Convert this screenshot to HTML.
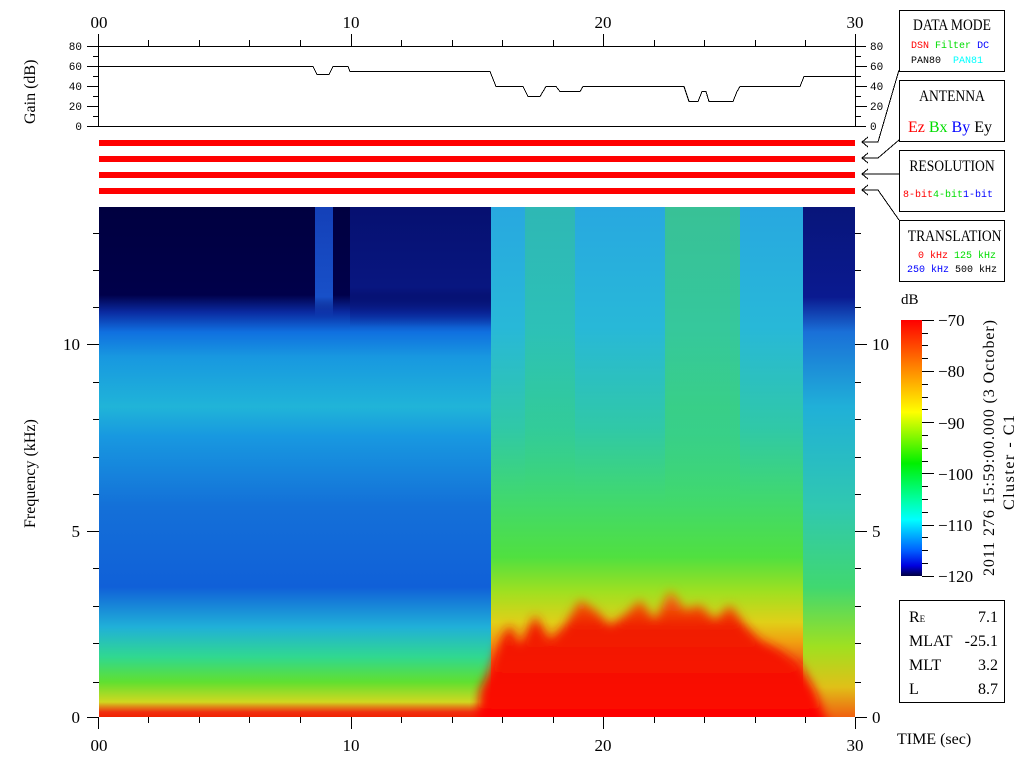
<!DOCTYPE html>
<html><head><meta charset="utf-8"><style>
body{margin:0;background:#fff;width:1024px;height:768px;overflow:hidden;position:relative;font-family:"Liberation Sans",sans-serif}
.a{position:absolute}
.serif{font-family:"Liberation Serif",serif}
.mono{font-family:"Liberation Mono",monospace}
.box{position:absolute;border:1px solid #000;background:#fff}
.bar{position:absolute;left:99px;width:756px;height:6px;background:#f00}
.t{position:absolute;left:0;width:104px;text-align:center;font-size:16px;transform:scaleX(.85);transform-origin:center}
</style></head><body>

<div class="a" style="left:99px;top:207px;width:392px;height:510px;background:linear-gradient(to bottom,#000040 0px,#00004a 88px,#0a2aa0 105px,#1070e0 125px,#1898e0 150px,#20b4d8 200px,#1898e0 230px,#1470d8 300px,#1060d8 380px,#20b0d8 420px,#30d890 450px,#60e030 475px,#d0d820 495px,#f03010 505px,#f02000 510px)"></div>
<div class="a" style="left:350px;top:207px;width:141px;height:120px;background:linear-gradient(to bottom,#061070 0,#081680 80px,rgba(16,80,220,0) 120px)"></div>
<div class="a" style="left:315px;top:207px;width:18px;height:110px;background:linear-gradient(to bottom,#1440b8 0,#1850c8 90px,rgba(24,100,220,0))"></div>
<div class="a" style="left:491px;top:207px;width:364px;height:510px;background:linear-gradient(to bottom,#28a8e0 0px,#28b8d8 120px,#30c8a8 220px,#40d870 290px,#50e040 350px,#a0e020 385px,#e0d018 415px,#f0a010 435px,#f06010 455px,#f03000 510px)"></div>
<div class="a" style="left:525px;top:207px;width:50px;height:300px;background:linear-gradient(to bottom,rgba(60,220,80,.3),rgba(60,220,80,.2) 200px,rgba(60,220,80,0))"></div>
<div class="a" style="left:665px;top:207px;width:75px;height:300px;background:linear-gradient(to bottom,rgba(80,230,40,.4),rgba(80,230,40,.3) 200px,rgba(80,230,40,0))"></div>
<div class="a" style="left:803px;top:207px;width:52px;height:510px;background:linear-gradient(to bottom,#08157a 0,#0a1a90 90px,#1a70d8 125px,#20b0d8 200px,#30c8b0 300px,#40d870 380px,#a0e020 440px,#e0c018 480px,#f06010 510px)"></div>
<svg class="a" style="left:0;top:0" width="1024" height="768">
<defs><linearGradient id="rg" x1="0" y1="0" x2="0" y2="1"><stop offset="0" stop-color="#f08010"/><stop offset=".25" stop-color="#f02000"/><stop offset="1" stop-color="#f00"/></linearGradient>
<filter id="bl" x="-5%" y="-10%" width="110%" height="120%"><feGaussianBlur stdDeviation="5"/></filter>
<clipPath id="cp"><rect x="470" y="500" width="385" height="217"/></clipPath></defs>
<g clip-path="url(#cp)"><polygon filter="url(#bl)" fill="url(#rg)" points="476,730 480,690 490,670 500,640 510,625 520,645 535,615 550,640 565,625 580,600 595,610 610,625 625,615 640,600 655,620 670,590 685,610 700,605 715,620 730,605 745,625 760,640 780,650 800,665 815,690 830,730"/></g>
</svg>

<div class="bar" style="top:140px"></div>
<div class="bar" style="top:156px"></div>
<div class="bar" style="top:172px"></div>
<div class="bar" style="top:188px"></div>

<svg class="a" style="left:0;top:0" width="1024" height="768">
<g stroke="#000" stroke-width="1" fill="none" shape-rendering="crispEdges">
<line x1="87" y1="46.5" x2="866" y2="46.5"/>
<line x1="87" y1="126.5" x2="866" y2="126.5"/>
<line x1="98.5" y1="34" x2="98.5" y2="127"/>
<line x1="855.5" y1="34" x2="855.5" y2="127"/>
<path d="M87 66.5h12M93 56.5h6M93 76.5h6M87 86.5h12M93 96.5h6M87 106.5h12M93 116.5h6"/>
<path d="M855 66.5h12M855 56.5h6M855 76.5h6M855 86.5h12M855 96.5h6M855 106.5h12M855 116.5h6"/>
<path d="M148.5 40v6M199.5 40v6M249.5 40v6M300.5 40v6M351.5 34v12M401.5 40v6M452.5 40v6M502.5 40v6M553.5 40v6M603.5 34v12M654.5 40v6M704.5 40v6M755.5 40v6M805.5 40v6"/>
<polyline points="99,66.5 313,66.5 317,74.5 329,74.5 333,66.5 348,66.5 350,71.5 490,71.5 496,86.5 523,86.5 528,96.5 540,96.5 546,86.5 556,86.5 560,91.5 580,91.5 583,86.5 684,86.5 689,101.5 698,101.5 702,91.5 706,91.5 709,101.5 733,101.5 737,91.5 740,86.5 800,86.5 804,76.5 855,76.5"/>
<path d="M87 717.5h12M93 682.5h6M93 643.5h6M93 606.5h6M93 568.5h6M87 531.5h12M93 494.5h6M93 457.5h6M93 419.5h6M93 382.5h6M87 344.5h12M93 307.5h6M93 270.5h6M93 233.5h6"/>
<path d="M855 717.5h12M855 682.5h6M855 643.5h6M855 606.5h6M855 568.5h6M855 531.5h12M855 494.5h6M855 457.5h6M855 419.5h6M855 382.5h6M855 344.5h12M855 307.5h6M855 270.5h6M855 233.5h6"/>
<path d="M98.5 717v12M148.5 717v6M199.5 717v6M249.5 717v6M300.5 717v6M351.5 717v12M401.5 717v6M452.5 717v6M502.5 717v6M553.5 717v6M603.5 717v12M654.5 717v6M704.5 717v6M755.5 717v6M805.5 717v6M855.5 717v12"/>
<polyline points="899,70 878,142 862,142"/>
<polyline points="899,140 878,158 862,158"/>
<polyline points="899,174 862,174"/>
<polyline points="899,220 878,190 862,190"/>
<path d="M868 137l-6 5 6 5M868 153l-6 5 6 5M868 169l-6 5 6 5M868 185l-6 5 6 5"/>
<path d="M922 320.5h12M922 333.5h6M922 345.5h6M922 358.5h6M922 371.5h12M922 384.5h6M922 397.5h6M922 409.5h6M922 422.5h12M922 435.5h6M922 448.5h6M922 461.5h6M922 473.5h12M922 486.5h6M922 499.5h6M922 512.5h6M922 525.5h12M922 537.5h6M922 550.5h6M922 563.5h6M922 576.5h12"/>
</g>
<g font-family="Liberation Mono,monospace" font-size="11" fill="#000">
<text x="82" y="50" text-anchor="end">80</text><text x="82" y="70" text-anchor="end">60</text><text x="82" y="90" text-anchor="end">40</text><text x="82" y="110" text-anchor="end">20</text><text x="82" y="130" text-anchor="end">0</text>
<text x="870" y="50">80</text><text x="870" y="70">60</text><text x="870" y="90">40</text><text x="870" y="110">20</text><text x="870" y="130">0</text>
</g>
<g font-family="Liberation Serif,serif" font-size="17" fill="#000">
<text x="99" y="28" text-anchor="middle">00</text><text x="351" y="28" text-anchor="middle">10</text><text x="603" y="28" text-anchor="middle">20</text><text x="855" y="28" text-anchor="middle">30</text>
<text x="99" y="751" text-anchor="middle">00</text><text x="351" y="751" text-anchor="middle">10</text><text x="603" y="751" text-anchor="middle">20</text><text x="855" y="751" text-anchor="middle">30</text>
<text x="80" y="723" text-anchor="end">0</text><text x="80" y="537" text-anchor="end">5</text><text x="80" y="350" text-anchor="end">10</text>
<text x="872" y="723">0</text><text x="872" y="537">5</text><text x="872" y="350">10</text>
<text transform="translate(35,124) rotate(-90)" font-size="16">Gain (dB)</text>
<text transform="translate(35,528) rotate(-90)" font-size="16">Frequency (kHz)</text>
<text x="897" y="744" font-size="16">TIME (sec)</text>
<text x="901" y="304" font-size="15">dB</text>
<text x="938" y="326">−70</text><text x="938" y="377">−80</text><text x="938" y="429">−90</text><text x="938" y="480">−100</text><text x="938" y="531">−110</text><text x="938" y="582">−120</text>
<text transform="translate(994,576) rotate(-90)" font-size="16" textLength="256">2011 276 15:59:00.000 (3 October)</text>
<text transform="translate(1014,510) rotate(-90)" font-size="16" textLength="95">Cluster - C1</text>
</g>
<defs><linearGradient id="cb" x1="0" y1="0" x2="0" y2="1">
<stop offset="0" stop-color="#f00"/><stop offset=".18" stop-color="#ff8000"/><stop offset=".36" stop-color="#ff0"/><stop offset=".56" stop-color="#00f000"/><stop offset=".7" stop-color="#00ffa0"/><stop offset=".78" stop-color="#00ffff"/><stop offset=".9" stop-color="#0060ff"/><stop offset=".96" stop-color="#0000e0"/><stop offset="1" stop-color="#000040"/></linearGradient></defs>
<rect x="901" y="320" width="21" height="256" fill="url(#cb)"/>
</svg>

<div class="box" style="left:899px;top:10px;width:104px;height:60px">
 <div class="t serif" style="top:6px">DATA MODE</div>
 <div class="a mono" style="left:11px;top:30px;font-size:10px;white-space:pre"><span style="color:#f00">DSN</span> <span style="color:#0d0">Filter</span> <span style="color:#00f">DC</span></div>
 <div class="a mono" style="left:11px;top:45px;font-size:10px;white-space:pre">PAN80  <span style="color:#0ff">PAN81</span></div>
</div>
<div class="box" style="left:899px;top:80px;width:104px;height:60px">
 <div class="t serif" style="top:7px">ANTENNA</div>
 <div class="a serif" style="left:8px;top:38px;font-size:16px;white-space:pre"><span style="color:#f00">Ez</span> <span style="color:#0d0">Bx</span> <span style="color:#00f">By</span> Ey</div>
</div>
<div class="box" style="left:899px;top:150px;width:104px;height:60px">
 <div class="t serif" style="top:7px">RESOLUTION</div>
 <div class="a mono" style="left:3px;top:39px;font-size:10px;white-space:pre"><span style="color:#f00">8-bit</span><span style="color:#0d0">4-bit</span><span style="color:#00f">1-bit</span></div>
</div>
<div class="box" style="left:899px;top:220px;width:104px;height:60px">
 <div class="t serif" style="top:7px">TRANSLATION</div>
 <div class="a mono" style="left:18px;top:30px;font-size:10px;white-space:pre"><span style="color:#f00">0 kHz</span> <span style="color:#0d0">125 kHz</span></div>
 <div class="a mono" style="left:7px;top:44px;font-size:10px;white-space:pre"><span style="color:#00f">250 kHz</span> 500 kHz</div>
</div>
<div class="box serif" style="left:899px;top:600px;width:104px;height:101px;font-size:16px">
 <div class="a" style="left:9px;top:8px">R<span style="font-size:9px">E</span></div><div class="a" style="right:6px;top:8px">7.1</div>
 <div class="a" style="left:9px;top:32px">MLAT</div><div class="a" style="right:6px;top:32px">-25.1</div>
 <div class="a" style="left:9px;top:56px">MLT</div><div class="a" style="right:6px;top:56px">3.2</div>
 <div class="a" style="left:9px;top:80px">L</div><div class="a" style="right:6px;top:80px">8.7</div>
</div>
</body></html>
